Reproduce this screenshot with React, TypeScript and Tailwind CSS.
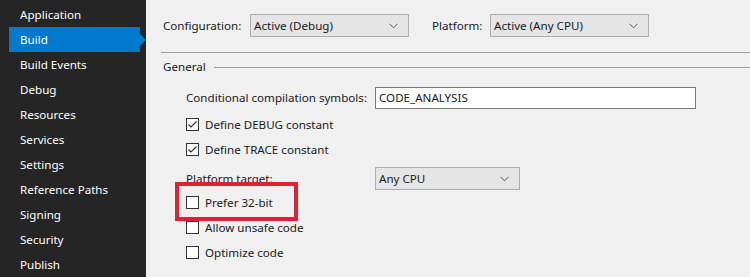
import React from "react";

const font = { fontFamily: '"Segoe UI", "Noto Sans", "Open Sans", sans-serif' };

function Chevron() {
  return (
    <svg width="9" height="6" viewBox="0 0 9 6" className="shrink-0">
      <path d="M0.5 0.8 L4.5 4.8 L8.5 0.8" fill="none" stroke="#555" strokeWidth="1" />
    </svg>
  );
}

function Select({ value, w }: { value: string; w: string }) {
  return (
    <div className={`${w} h-[23px] flex items-center justify-between border border-[#adadad] bg-[#e5e5e5] pl-[3px] pr-[10px] text-[11.6px] text-[#1a1a1a]`}>
      <span>{value}</span>
      <Chevron />
    </div>
  );
}

function Check({ checked, label }: { checked?: boolean; label: string }) {
  return (
    <div className="flex items-center h-[25px]">
      <div className="w-[13px] h-[13px] border border-[#333] bg-white flex items-center justify-center">
        {checked && (
          <svg width="11" height="11" viewBox="0 0 11 11">
            <path d="M1.5 5.5 L4 8 L9.5 2.5" fill="none" stroke="#333" strokeWidth="1.2" />
          </svg>
        )}
      </div>
      <span className="ml-[6px] text-[11.6px] text-[#1a1a1a]">{label}</span>
    </div>
  );
}

const items = [
  "Application",
  "Build",
  "Build Events",
  "Debug",
  "Resources",
  "Services",
  "Settings",
  "Reference Paths",
  "Signing",
  "Security",
  "Publish",
];

export default function App() {
  return (
    <div className="w-[750px] h-[277px] flex overflow-hidden bg-[#f0f0f0]" style={font}>
      <div className="w-[146px] shrink-0 bg-[#252526] pt-[2px] pl-[9px]">
        {items.map((it) => (
          <div key={it} className="relative h-[25px]">
            <div
              className={`h-[25px] w-[131px] flex items-center pl-[11px] text-[11.6px] text-white ${
                it === "Build" ? "bg-[#007acc]" : ""
              }`}
            >
              {it}
            </div>
            {it === "Build" && (
              <div className="absolute left-[131px] top-[7px] w-0 h-0 border-y-[6px] border-y-transparent border-l-[6px] border-l-[#007acc]" />
            )}
          </div>
        ))}
      </div>
      <div className="flex-1 flex flex-col">
        <div className="flex items-center h-[23px] mt-[14px] pl-[17px] text-[11.6px] text-[#1a1a1a]">
          <span className="w-[87px]">Configuration:</span>
          <Select value="Active (Debug)" w="w-[159px]" />
          <span className="ml-[23px] w-[58px]">Platform:</span>
          <Select value="Active (Any CPU)" w="w-[159px]" />
        </div>
        <div className="ml-[15px] mt-[15px] h-px bg-[#a0a0a0]" />
        <div className="flex items-center h-[16px] mt-[6px] pl-[17px]">
          <span className="text-[11.6px] text-[#1a1a1a]">General</span>
          <div className="flex-1 ml-[8px] h-px bg-[#a0a0a0]" />
        </div>
        <div className="pl-[40px] mt-[12px]">
          <div className="flex items-center h-[22px]">
            <span className="w-[189px] text-[11.6px] text-[#1a1a1a]">Conditional compilation symbols:</span>
            <div className="w-[321px] h-[22px] border border-[#7a7a7a] bg-white flex items-center pl-[3px] text-[11.6px] text-[#1a1a1a]">
              CODE_ANALYSIS
            </div>
          </div>
          <div className="mt-[3px]">
            <Check checked label="Define DEBUG constant" />
            <Check checked label="Define TRACE constant" />
          </div>
          <div className="flex items-center h-[23px] mt-[5px]">
            <span className="w-[189px] text-[11.6px] text-[#1a1a1a]">Platform target:</span>
            <Select value="Any CPU" w="w-[145px]" />
          </div>
          <div className="relative">
            <div className="absolute left-[-11px] top-[-8px] w-[123px] h-[39px] border-[4px] border-[#e3202f]" />
            <Check label="Prefer 32-bit" />
            <Check label="Allow unsafe code" />
            <Check label="Optimize code" />
          </div>
        </div>
      </div>
    </div>
  );
}
